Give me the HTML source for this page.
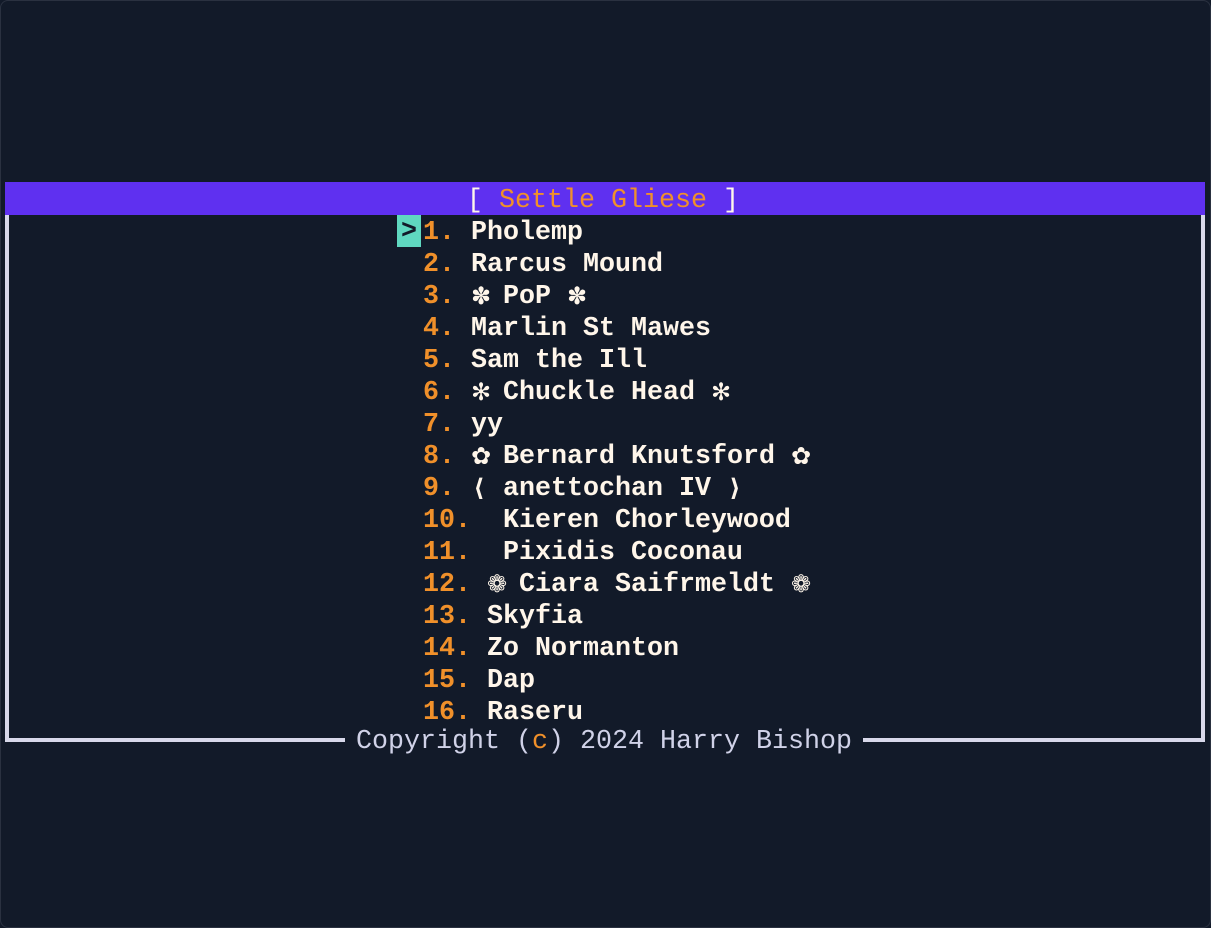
<!DOCTYPE html>
<html><head><meta charset="utf-8"><style>
html,body{margin:0;padding:0;width:1211px;height:928px;overflow:hidden;background:#121a29;}
.win{position:absolute;left:0;top:0;width:1209px;height:926px;border:1px solid #2a3140;border-radius:8px;background:#121a29;}
.bar{position:absolute;left:5px;top:182px;width:1200px;height:33px;background:#5f30f0;}
.bl{position:absolute;left:5px;top:215px;width:4px;height:527px;background:#d8d8ea;}
.br{position:absolute;left:1201px;top:215px;width:4px;height:527px;background:#d8d8ea;}
.bb{position:absolute;left:5px;top:738px;width:1200px;height:4px;background:#d8d8ea;}
.t{position:absolute;font-family:"Liberation Mono","DejaVu Sans Mono",monospace;font-size:26.67px;line-height:32px;height:32px;white-space:pre;font-weight:bold;color:#fff6ea;}
.o{color:#f0902a;}
.s{display:inline-block;width:16px;height:32px;vertical-align:top;text-align:center;font-family:"DejaVu Sans",sans-serif;font-size:24px;line-height:30px;}
.cur{position:absolute;left:397px;top:215px;width:24px;height:32px;background:#5fd8c0;color:#121a29;font-family:"Liberation Mono",monospace;font-weight:bold;font-size:26.67px;line-height:34px;text-align:center;}
.copy{position:absolute;left:345px;top:726px;width:518px;height:32px;text-align:center;font-family:"Liberation Mono",monospace;font-size:26.67px;line-height:32px;color:#d0d2e8;white-space:pre;}
.cbg{position:absolute;left:345px;top:736px;width:518px;height:8px;background:#121a29;}
</style></head><body>
<div class="win"></div>
<div class="bar"></div>
<div class="bl"></div><div class="br"></div><div class="bb"></div>
<div class="t" style="left:467px;top:185px;font-weight:normal;color:#fff6ea">[ <span class="o">Settle Gliese</span> ]</div>
<div class="cur">&gt;</div>
<div class="t" style="left:423px;top:217px"><span class="o">1. </span>Pholemp</div>
<div class="t" style="left:423px;top:249px"><span class="o">2. </span>Rarcus Mound</div>
<div class="t" style="left:423px;top:281px"><span class="o">3. </span><span class="s">✽</span> PoP <span class="s">✽</span></div>
<div class="t" style="left:423px;top:313px"><span class="o">4. </span>Marlin St Mawes</div>
<div class="t" style="left:423px;top:345px"><span class="o">5. </span>Sam the Ill</div>
<div class="t" style="left:423px;top:377px"><span class="o">6. </span><span class="s">✻</span> Chuckle Head <span class="s">✻</span></div>
<div class="t" style="left:423px;top:409px"><span class="o">7. </span>yy</div>
<div class="t" style="left:423px;top:441px"><span class="o">8. </span><span class="s">✿</span> Bernard Knutsford <span class="s">✿</span></div>
<div class="t" style="left:423px;top:473px"><span class="o">9. </span><span class="s">⟨</span> anettochan IV <span class="s">⟩</span></div>
<div class="t" style="left:423px;top:505px"><span class="o">10.  </span>Kieren Chorleywood</div>
<div class="t" style="left:423px;top:537px"><span class="o">11.  </span>Pixidis Coconau</div>
<div class="t" style="left:423px;top:569px"><span class="o">12. </span><span class="s">❁</span> Ciara Saifrmeldt <span class="s">❁</span></div>
<div class="t" style="left:423px;top:601px"><span class="o">13. </span>Skyfia</div>
<div class="t" style="left:423px;top:633px"><span class="o">14. </span>Zo Normanton</div>
<div class="t" style="left:423px;top:665px"><span class="o">15. </span>Dap</div>
<div class="t" style="left:423px;top:697px"><span class="o">16. </span>Raseru</div>
<div class="cbg"></div>
<div class="copy">Copyright (<span style="color:#f0902a">c</span>) 2024 Harry Bishop</div>
</body></html>
